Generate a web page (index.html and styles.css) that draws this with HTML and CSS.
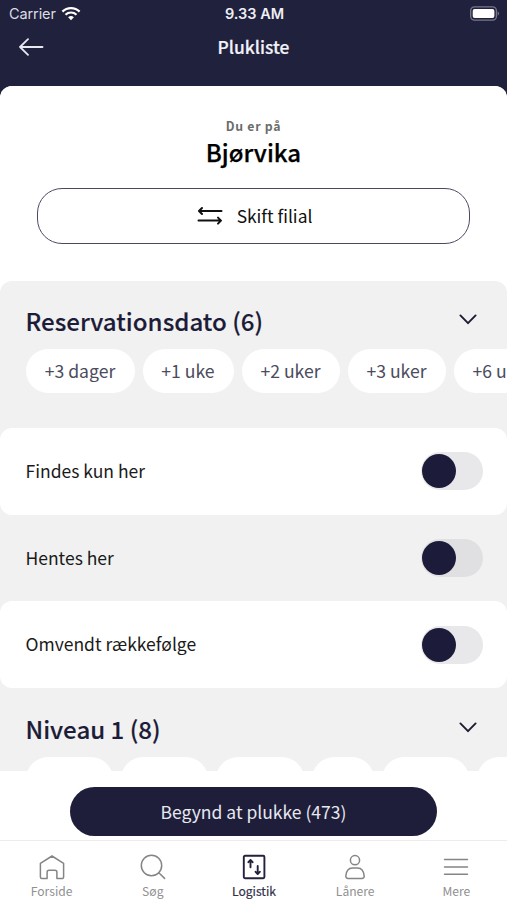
FILE: index.html
```
<!DOCTYPE html>
<html lang="da">
<head>
	<meta charset="utf-8">
	<meta name="viewport" content="width=device-width, initial-scale=1">
	<title>Plukliste</title>
	<link rel="stylesheet" href="styles.css">
</head>
<body>

<div class="app">
	<header class="top">
		<div class="status">
			<div class="carrier">
				<span>Carrier</span>
				<svg class="wifi" width="20" height="15" viewBox="0 0 20 15">
					<path d="M1.4 5.6a12.4 12.4 0 0 1 17.2 0" fill="none" stroke="#fff" stroke-width="2.3"/>
					<path d="M4.5 8.7a8 8 0 0 1 11 0" fill="none" stroke="#fff" stroke-width="2.2"/>
					<path d="M10 14.3l-2.9-3a4.2 4.2 0 0 1 5.8 0z" fill="#fff"/>
				</svg>
			</div>
			<div class="clock">9.33 AM</div>
			<div class="battery">
				<svg width="30" height="15" viewBox="0 0 31 15">
					<rect x=".7" y=".7" width="26.6" height="13.6" rx="4" fill="none" stroke="#77778a" stroke-width="1.4"/>
					<rect x="2.8" y="2.8" width="22.4" height="9.4" rx="2" fill="#fff"/>
					<path d="M28.6 5.2a2.6 2.6 0 0 1 0 4.6z" fill="#77778a"/>
				</svg>
			</div>
		</div>
		<div class="titlebar">
			<svg class="back" width="26" height="18" viewBox="0 0 26 18">
				<path d="M10 1.2L2 9l8 7.8M2 9h22.5" fill="none" stroke="#e8e8f0" stroke-width="1.8" stroke-linecap="round" stroke-linejoin="round"/>
			</svg>
			<h1>Plukliste</h1>
		</div>
	</header>

	<main class="sheet">
		<section class="branch">
			<div class="branch-label">Du er på</div>
			<div class="branch-name">Bjørvika</div>
			<button class="switch-branch">
				<svg width="26" height="20" viewBox="0 0 26 20">
					<path d="M24.5 6H2.2M5 3L2 6l3 3M1.5 15.600h22.300M21 12.600l3 3-3 3" fill="none" stroke="#111" stroke-width="2" stroke-linecap="round" stroke-linejoin="round"/>
				</svg>
				<span>Skift filial</span>
			</button>
		</section>

		<section class="group group-dates">
			<div class="group-head">
				<h2>Reservationsdato (6)</h2>
				<svg class="chevron" width="18" height="11" viewBox="0 0 18 11">
					<path d="M1.4 1.4L9 9.2l7.6-7.8" fill="none" stroke="#1c1c34" stroke-width="1.9" stroke-linecap="round" stroke-linejoin="round"/>
				</svg>
			</div>
			<div class="chips">
				<span class="chip w-109">+3 dager</span>
				<span class="chip w-91">+1 uke</span>
				<span class="chip">+2 uker</span>
				<span class="chip">+3 uker</span>
				<span class="chip">+6 uker</span>
			</div>
		</section>

		<div class="row row-white"><span>Findes kun her</span><i class="toggle"></i></div>
		<div class="row"><span>Hentes her</span><i class="toggle"></i></div>
		<div class="row row-white"><span>Omvendt rækkefølge</span><i class="toggle"></i></div>

		<section class="group">
			<div class="group-head">
				<h2>Niveau 1 (8)</h2>
				<svg class="chevron" width="18" height="11" viewBox="0 0 18 11">
					<path d="M1.4 1.4L9 9.2l7.6-7.8" fill="none" stroke="#1c1c34" stroke-width="1.9" stroke-linecap="round" stroke-linejoin="round"/>
				</svg>
			</div>
			<div class="chips">
				<span class="chip w-87"></span>
				<span class="chip w-87"></span>
				<span class="chip w-87"></span>
				<span class="chip w-62"></span>
				<span class="chip w-87"></span>
				<span class="chip w-87"></span>
			</div>
		</section>
	</main>

	<div class="action">
		<button class="start">Begynd at plukke (473)</button>
	</div>

	<nav class="tabs">
		<a class="tab">
			<svg width="26" height="26" viewBox="0 0 26 26">
				<path d="M1.4 9.4L13 2l11.6 7.4v13.700a1.500 1.500 0 0 1-1.500 1.500h-5.200v-6.400a2 2 0 0 0-2-2h-5.800a2 2 0 0 0-2 2v6.400H2.900a1.500 1.500 0 0 1-1.500-1.500z"/>
			</svg>
			<span>Forside</span>
		</a>
		<a class="tab">
			<svg width="26" height="26" viewBox="0 0 26 26">
				<circle cx="11.5" cy="11.5" r="10.2"/>
				<path d="M18.800 18.800l5.800 5.600"/>
			</svg>
			<span>Søg</span>
		</a>
		<a class="tab active">
			<svg width="26" height="26" viewBox="0 0 26 26">
				<rect x="2.8" y="1.7" width="20.6" height="22.6" rx="1.2"/>
				<path d="M9.5 13.200V6.200M7.400 8.200l2.100-2.200 2.100 2.200M16.700 12v7.800M14.600 17.800l2.100 2.200 2.100-2.200"/>
			</svg>
			<span>Logistik</span>
		</a>
		<a class="tab">
			<svg width="26" height="26" viewBox="0 0 26 26">
				<circle cx="13" cy="6.2" r="4.6"/>
				<path d="M6 24.500h14a2.200 2.200 0 0 0 2.200-2.400c-.5-5-2.800-8-6.600-8h-5.200c-3.800 0-6.100 3-6.600 8A2.200 2.200 0 0 0 6 24.500z"/>
			</svg>
			<span>Lånere</span>
		</a>
		<a class="tab">
			<svg width="26" height="26" viewBox="0 0 26 26">
				<path d="M1.5 5.5h23M1.5 12.900h23M1.5 20.200h23"/>
			</svg>
			<span>Mere</span>
		</a>
	</nav>
</div>

</body>
</html>
```
FILE: styles.css
```
* {
	box-sizing: border-box;
}
body {
	margin: 0;
	background: #fff;
	font-family: "Noto Sans CJK SC", "Noto Sans", sans-serif;
	color: #1a1a1a;
}
h1, h2 {
	margin: 0;
	font-weight: 500;
}
button {
	font-family: inherit;
	padding: 0;
}
.app {
	height: 900px;
	display: flex;
	flex-direction: column;
	overflow: hidden;
	background: #fff;
}

/* --- top --- */

.top {
	flex: none;
	height: 98px;
	margin-bottom: -12px;
	background: #20213c;
	color: #fff;
}
.status {
	display: grid;
	grid-template-columns: 1fr auto 1fr;
	align-items: center;
	height: 27px;
	padding: 0 7px 0 9px;
	font-family: Inter, "Liberation Sans", sans-serif;
	font-size: 14.5px;
}
.carrier {
	display: flex;
	align-items: center;
	gap: 5px;
	letter-spacing: -.1px;
	color: #dcdce4;
}
.wifi {
	margin-top: -1px;
}
.clock {
	font-weight: 600;
	color: #eeeef4;
}
.battery {
	display: flex;
	justify-content: flex-end;
}
.titlebar {
	display: grid;
	grid-template-columns: 1fr auto 1fr;
	align-items: center;
	height: 40px;
	padding: 0 18px;
}
.titlebar h1 {
	padding-bottom: 1px;
	font-size: 17.4px;
	line-height: 24px;
	-webkit-text-stroke: .2px;
	color: #f2f2f8;
}

/* --- sheet --- */

.sheet {
	flex: 1;
	min-height: 0;
	overflow: hidden;
	background: #f1f1f1;
	border-radius: 12px 12px 0 0;
}
.branch {
	height: 195px;
	padding: 30px 37px 0;
	background: #fff;
	text-align: center;
}
.branch-label {
	font-size: 12.3px;
	line-height: 20px;
	font-weight: 700;
	letter-spacing: .75px;
	color: #6c6c6c;
}
.branch-name {
	font-size: 24px;
	line-height: 32px;
	font-weight: 500;
	-webkit-text-stroke: .25px;
	color: #000;
}
.switch-branch {
	display: flex;
	align-items: center;
	justify-content: center;
	gap: 14px;
	width: 100%;
	height: 56px;
	margin-top: 20px;
	padding: 0 0 2px 2px;
	border: 1.5px solid #4a4a60;
	border-radius: 25px;
	background: #fff;
	color: #111;
	font-size: 17.4px;
}
.group {
	height: 147px;
	padding: 25px 0 0 25.5px;
	background: #f1f1f1;
}
.group-dates {
	padding-top: 24px;
	border-radius: 12px 12px 0 0;
	box-shadow: 0 -12px 0 #fff;
}
.group-head {
	display: flex;
	align-items: center;
	justify-content: space-between;
	height: 32px;
	padding-right: 30px;
}
.group-head h2 {
	font-size: 24.1px;
	line-height: 32px;
	-webkit-text-stroke: .15px;
	color: #1c1c38;
}
.chevron {
	margin-top: -4px;
}
.chips {
	display: flex;
	gap: 8px;
	margin-top: 12px;
	overflow: hidden;
}
.chip {
	flex: none;
	width: 98px;
	height: 44px;
	border-radius: 22px;
	background: #fff;
	color: #4b4b5d;
	font-size: 17.6px;
	line-height: 44px;
	text-align: center;
}
.w-109 { width: 109px; }
.w-91 { width: 91px; }
.w-87 { width: 87.4px; }
.w-62 { width: 62px; }

.row {
	display: flex;
	align-items: center;
	justify-content: space-between;
	height: 86.7px;
	padding: 0 24px 0 25.5px;
	font-size: 17.5px;
}
.row span {
	margin-top: -2px;
}
.row-white {
	background: #fff;
	border-radius: 12px;
}
.toggle {
	width: 62px;
	height: 38px;
	padding: 2px 1px;
	border-radius: 19px;
	background: #e0e0e2;
}
.row-white .toggle {
	background: #e8e8ea;
}
.toggle::before {
	content: "";
	display: block;
	width: 34px;
	height: 34px;
	border-radius: 50%;
	background: #1c1c3a;
}

/* --- bottom --- */

.action {
	flex: none;
	height: 69px;
	padding: 16px 70px 0;
	background: #fff;
}
.start {
	display: block;
	width: 100%;
	height: 49px;
	padding-bottom: 1px;
	border: 0;
	border-radius: 25px;
	background: #1e1e3a;
	color: #e8e8f0;
	font-size: 17.5px;
}
.tabs {
	flex: none;
	display: grid;
	grid-template-columns: repeat(5, 1fr);
	height: 60px;
	padding-left: 1px;
	border-top: 1px solid #ececee;
}
.tab {
	display: flex;
	flex-direction: column;
	align-items: center;
	padding-top: 13px;
	color: #909090;
	font-size: 12.1px;
	line-height: 22px;
}
.tab svg {
	fill: none;
	stroke: #858585;
	stroke-width: 1.5;
	stroke-linecap: round;
	stroke-linejoin: round;
}
.active {
	color: #30304a;
	-webkit-text-stroke: .2px;
}
.active svg {
	stroke: #22223e;
	stroke-width: 1.9;
}
```
